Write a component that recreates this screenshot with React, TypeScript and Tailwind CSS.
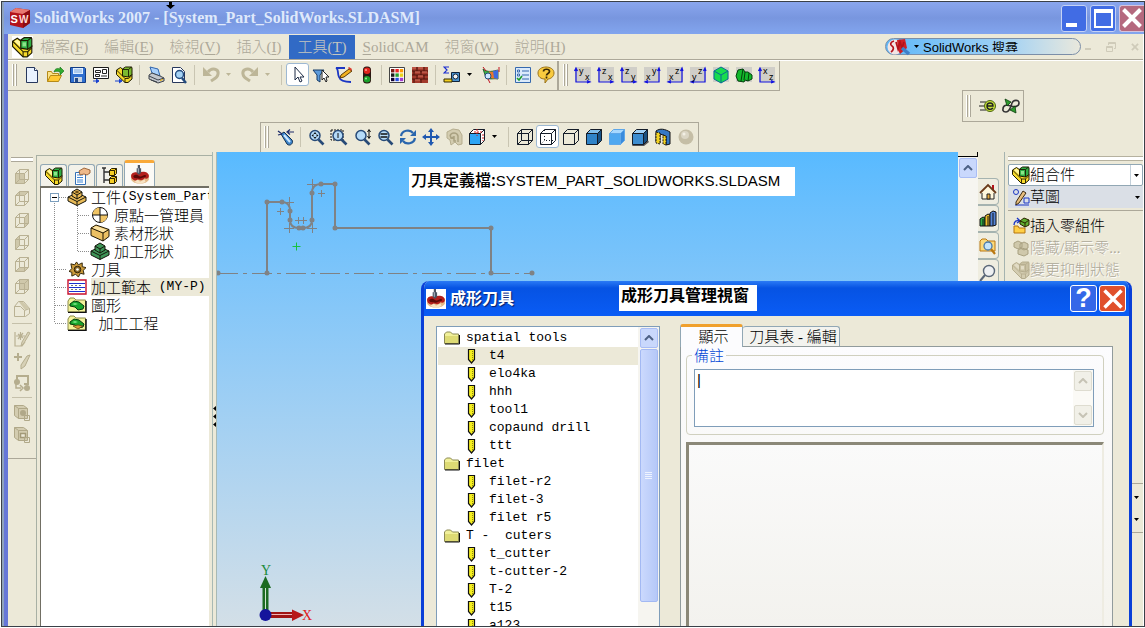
import React, { type ReactNode } from "react";

type KidProps = { children?: ReactNode };

function Svg({ children, className = "w-[18px] h-[18px]" }: KidProps & { className?: string }) {
  return (
    <svg viewBox="0 0 18 18" className={`shrink-0 ${className}`} fill="none" aria-hidden="true">
      {children}
    </svg>
  );
}

/* ---------- brand and window icons ---------- */

const SwCube = () => (
  <svg viewBox="0 0 22 22" className="h-[22px] w-[22px] shrink-0" aria-hidden="true">
    <path d="M1 5 7 1l14 2v13l-7 5L1 18z" fill="#b3121a" />
    <path d="M1 5 7 1l14 2-7 4z" fill="#e87a72" />
    <path d="M14 7l7-4v13l-7 5z" fill="#8d0d12" />
    <text x="1.5" y="16" fontSize="11" fontWeight="bold" fill="#fff" fontFamily="Liberation Sans">S</text>
    <text x="10" y="16" fontSize="10" fontWeight="bold" fill="#ffd9d5" fontFamily="Liberation Sans">W</text>
  </svg>
);

const Assembly = ({ className = "w-[18px] h-[18px]", gray = false }: { className?: string; gray?: boolean }) => {
  const line = gray ? "#b5ad8e" : "#1d1a00";
  return (
    <Svg className={className}>
      <path d="M.5 4l4-2.500L8 4v4h9v6l-4 3.500H9.500L.5 8.500z" fill={gray ? "#d3ccb0" : "#f6d92b"} stroke={line} />
      <path d="M.5 4l9 9v4.500M9.500 13h4L17 9.500M13.500 13v4" stroke={line} strokeWidth=".9" />
      <path d="M2 4l2.500-1.500L7.500 5v4z" fill={gray ? "#e2dcc6" : "#fff6a0"} />
      <path d="M7.500 3l3-2h6l.500 1v6.500L13.500 11l-6-1z" fill={gray ? "#c8c0a2" : "#2fae45"} stroke={line} />
      <path d="M7.500 3.500h6V11M13.500 3.500l3-2.500" stroke={line} strokeWidth=".9" />
      <path d="M9 5h3v3.500H9z" fill={gray ? "#e2dcc6" : "#8ce68a"} />
    </Svg>
  );
};

const Cutter = ({ className = "w-[20px] h-[20px]" }: { className?: string }) => (
  <Svg className={className}>
    <path d="M1 9c1-3 15-3 16 0v4c-2 5-14 5-16 0z" fill="#e3b987" />
    <path d="M1 10c0-4 5-4 7-3 3-2 9-1 9 3 0 2-2 3-4 2-1 2-4 2-5 1-2 2-7 1-7-3z" fill="#b41f1c" />
    <path d="M3 10c2-2 4-1 5 0s3 0 5-1c2 0 2 2 0 2-2 0-4 2-6 1-2 0-4 0-4-2z" fill="#5c0907" />
    <path d="M4 15l3-2 2 2 4-2 1 2c-3 2-7 2-10 0z" fill="#f7e3c4" />
    <path d="M7 0h2v3h1v4L8 9 6 7V3h1z" fill="#4b5563" />
    <path d="M7 3h1v4H7z" fill="#a9b4c2" />
  </Svg>
);

/* ---------- standard toolbar ---------- */

const NewDoc = () => (
  <Svg>
    <path d="M3.500 1.500h8l3 3v12h-11z" fill="#e9f2ff" stroke="#27375c" />
    <path d="M11.500 1.500v3h3" stroke="#27375c" fill="#fff" />
  </Svg>
);
const OpenDoc = () => (
  <Svg>
    <path d="M1.500 15.500v-10h4l1 2h6v2" fill="#fbe389" stroke="#b58a18" />
    <path d="M1.500 15.500l3-6h11l-3 6z" fill="#ffc933" stroke="#b58a18" />
    <path d="M8 6c1-4 4-4 6-3V1l4 4-4 4V6c-2-1-4-1-6 0z" fill="#2fab2f" stroke="#116b11" strokeWidth=".6" />
  </Svg>
);
const Save = () => (
  <Svg>
    <path d="M1.500 1.500h14l1 1v14h-15z" fill="#2f6fd0" stroke="#123c85" />
    <path d="M4 2h10v6H4z" fill="#dfeeff" />
    <path d="M5 4h8M5 6h8" stroke="#7ba5dc" />
    <path d="M5 11h8v5H5z" fill="#c7d3e2" />
    <path d="M6 12h3v4H6z" fill="#234a8a" />
  </Svg>
);
const Drawing = () => (
  <Svg>
    <path d="M1.500 1.500h15v11h-15z" fill="#fff" stroke="#1c1c1c" />
    <path d="M3.500 4.500h5v2h-5zM10.500 3.500h4v4h-4zM3.500 8.500h4v2h-4z" stroke="#222" />
    <path d="M9 10h6" stroke="#222" />
    <path d="M1 15h5M4 13l3 2-3 2" stroke="#1740d0" fill="#1740d0" />
  </Svg>
);
const MakeAssembly = () => (
  <Svg>
    <path d="M1.500 4l4-2.500L8.500 4v4H17v5l-4 3.500h-3L1.500 8.500z" fill="#f6d92b" stroke="#1d1a00" />
    <path d="M1.500 4l8.500 8.500v4M10 12.500h3.500L17 9.500" stroke="#1d1a00" strokeWidth=".9" />
    <path d="M7.500 3l3-2h6l.500 1v6.500L13.500 11l-6-1z" fill="#7bb92f" stroke="#1d1a00" />
    <path d="M7.500 3.500h6V11M13.500 3.500l3-2.500" stroke="#1d1a00" strokeWidth=".9" />
    <path d="M0 15h5M4 13l3 2-3 2" stroke="#1740d0" fill="#1740d0" />
  </Svg>
);
const Print = () => (
  <Svg>
    <path d="M3 1l8 2 2 7-8-3z" fill="#a9d0fb" stroke="#2f64ac" />
    <path d="M2 9l3-2 8 3 4 2v3l-6 2-9-4z" fill="#c3c7cd" stroke="#3e434b" />
    <path d="M2 10l9 4 6-2M4 14l6 2" stroke="#3e434b" />
    <path d="M13 14l3-1v1l-3 1z" fill="#f5b400" />
  </Svg>
);
const Preview = () => (
  <Svg>
    <path d="M2.500 1.500h8l4 4v11h-12z" fill="#fff" stroke="#27375c" />
    <circle cx="9.500" cy="8.500" r="4" fill="#a7d3f5" stroke="#234b7d" strokeWidth="1.400" />
    <path d="M12 12l4 5" stroke="#234b7d" strokeWidth="2.400" />
  </Svg>
);
const Undo = ({ flip = false }: { flip?: boolean }) => (
  <Svg>
    <g transform={flip ? "matrix(-1 0 0 1 18 0)" : undefined}>
      <path d="M6 6c4-5 11-3 10 2-.5 4-4 5-7 7" stroke="#bdb698" strokeWidth="3" />
      <path d="M1 1v9h9z" fill="#bdb698" />
    </g>
  </Svg>
);
const Pointer = () => (
  <Svg>
    <path d="M6 1v13l3-3 2 5 2-1-2-4h4z" fill="#fff" stroke="#1c2a44" />
  </Svg>
);
const Filter = () => (
  <Svg>
    <path d="M1 4h11l-4 5v7l-3-2V9z" fill="#5b9bdc" stroke="#173a66" />
    <path d="M10 4v10l2-2 2 4 1-1-1-4h3z" fill="#fff" stroke="#222" />
  </Svg>
);
const Sketch = () => (
  <Svg>
    <path d="M10 2H1c3 1 1 5 3 9 1 3 5 5 12 5" stroke="#1b36c4" strokeWidth="1.800" />
    <path d="M6 9l8-6 3 2-8 6-4 1z" fill="#f2b21d" stroke="#5b3b06" />
    <path d="M13 2l1-1 3 2-1 2z" fill="#d9392b" />
  </Svg>
);
const Traffic = () => (
  <Svg>
    <rect x="5" y="0.500" width="8" height="17" rx="3.500" fill="#2b1712" />
    <circle cx="9" cy="4.800" r="3.300" fill="#e0241b" />
    <circle cx="9" cy="13.200" r="3.300" fill="#1aa02a" />
    <circle cx="8" cy="4" r="1" fill="#ff9f97" />
    <circle cx="8" cy="12.400" r="1" fill="#9cf2a0" />
  </Svg>
);
const GRID_COLOURS = [
  ["#7a1b14", "#e22", "#f90"],
  ["#1a1a1a", "#27a02d", "#e9d21a"],
  ["#103", "#2a50e0", "#a33bd0"],
];
const Palette = () => (
  <Svg>
    <path d="M1.500 1.500h15v15h-15z" fill="#fff" stroke="#444" />
    {GRID_COLOURS.map((row, r) =>
      row.map((c, i) => <rect key={`${r}-${i}`} x={3 + i * 4.400} y={3 + r * 4.400} width="3.400" height="3.400" fill={c} />),
    )}
  </Svg>
);
const Bricks = () => (
  <Svg>
    <path d="M1 1h16v16H1z" fill="#a33a2c" />
    <path d="M1 5h16M1 9h16M1 13h16M6 1v4M13 1v4M3 5v4M10 5v4M6 9v4M13 9v4M3 13v4M10 13v4" stroke="#4a120b" />
    <path d="M1 2h4M7 2h5M4 6h5M11 6h5M7 10h5M4 14h5" stroke="#d4705f" />
  </Svg>
);
const Measure = () => (
  <Svg>
    <path d="M6 1H1l3 3-3 3h5" stroke="#1b2fd0" strokeWidth="1.200" />
    <path d="M8.500 6.500h8v9h-8z" fill="#4b93cf" stroke="#10233a" />
    <circle cx="12.500" cy="10.500" r="2.500" fill="#f4f4f4" stroke="#10233a" />
    <path d="M1 13h8v3H1z" fill="#f4d01e" stroke="#332a00" />
  </Svg>
);
const Thickness = () => (
  <Svg>
    <path d="M1 3c5 4 10 2 15 1v9c-4-1-8 1-12-1z" fill="#3cae49" stroke="#184d1e" strokeWidth=".8" />
    <path d="M7 5c3 2 6 0 9-1v9c-3-1-5 0-7-1z" fill="#e8772c" />
    <path d="M11 5l5-1v9l-4-1z" fill="#3d6be0" />
    <circle cx="6" cy="10" r="3" fill="#cde7ff" stroke="#234b7d" />
    <path d="M6 13l2 4M1 1l3 4M17 1v5" stroke="#c1121f" />
  </Svg>
);
const Options = () => (
  <Svg>
    <path d="M1.500 1.500h15v15h-15z" fill="#dbeafb" stroke="#3669ae" />
    <path d="M8 5h7M8 9h7M8 13h7" stroke="#3669ae" strokeWidth="1.200" />
    <path d="M3.500 4h2v2h-2zM3.500 8h2v2h-2z" stroke="#3669ae" fill="#fff" />
    <path d="M3 12l2 2 3-4" stroke="#1d9c2b" strokeWidth="1.600" />
  </Svg>
);
const Help = () => (
  <Svg>
    <path d="M1 7c0-8 16-8 16 0 0 4-4 6-6 6l-3 4v-4C4 13 1 11 1 7z" fill="#f9cb3f" stroke="#99721a" />
    <path d="M6.500 5.500c0-3 6-3 6 0 0 2-3 2-3 4M9.500 10.500v2" stroke="#3b2a06" strokeWidth="1.700" />
  </Svg>
);
const Caret = ({ muted = false }: { muted?: boolean }) => (
  <svg viewBox="0 0 5 3" className={`h-[3px] w-[5px] shrink-0 ${muted ? "fill-[#bdb698]" : "fill-black"}`} aria-hidden="true">
    <path d="M0 0h5L2.500 3z" />
  </svg>
);
const Axes = ({ top, side, right = false }: { top: string; side: string; right?: boolean }) => (
  <svg viewBox="0 0 20 20" className="h-5 w-5 shrink-0" fill="none" aria-hidden="true">
    <path d="M2 2h16v15H2z" fill="#d0cec8" />
    <g stroke="#1212e0" strokeWidth="1.200">
      {right ? <path d="M17 3v14H3M15.500 6L17 3l1 3M6 15.500L3 17l3 1" /> : <path d="M3 3v14h14M1.500 6L3 3l1.500 3M14 15.500l3 1.500-3 1" />}
    </g>
    <text x={right ? 10 : 6} y="9" fontSize="9" fill="#000" fontFamily="Liberation Sans">{top}</text>
    <text x={right ? 4 : 12} y="15" fontSize="9" fill="#000" fontFamily="Liberation Sans">{side}</text>
  </svg>
);
const GreenCube = () => (
  <Svg>
    <path d="M1 1h16v15H1z" fill="#d0cec8" />
    <path d="M9 1l7 4v8l-7 4-7-4V5z" fill="#18dc4e" stroke="#0a6a94" />
    <path d="M2 5l7 4 7-4M9 9v8" stroke="#0a6a94" />
  </Svg>
);
const GreenPart = () => (
  <Svg>
    <path d="M1 1h16v15H1z" fill="#d0cec8" />
    <path d="M1 10l2-6 5-1 2 3h3l4 3v4l-4 2-3-1-1 2-6-1z" fill="#12b82a" stroke="#04400c" />
    <path d="M8 3L6 15M10 6l-1 8M14 7l-1 8" stroke="#04400c" />
  </Svg>
);

/* ---------- view toolbar ---------- */

const Zoom = ({ kind }: { kind: "fit" | "area" | "inout" | "select" }) => (
  <Svg>
    {kind === "area" && <path d="M1 2h12v10H1z" stroke="#111" strokeDasharray="2 1" />}
    <circle cx="8" cy="7.500" r="5" fill="#b5dbf8" stroke="#274a77" strokeWidth="1.500" />
    <path d="M11.500 11.500l5 5" stroke="#274a77" strokeWidth="2.600" />
    {kind === "fit" && <path d="M8 4l1.500 2h-3zM8 11L6.500 9h3zM4.500 7.500l2-1.500v3zM11.500 7.500l-2-1.500v3z" fill="#111" />}
    {kind === "area" && <path d="M8 5v5" stroke="#111" />}
    {kind === "inout" && <path d="M16 2v8M14.500 4L16 1.500 17.500 4M14.500 8l1.500 2.500L17.500 8" stroke="#111" />}
    {kind === "select" && <path d="M4.500 6h7M4.500 9h7" stroke="#111" strokeWidth="1.400" />}
  </Svg>
);
const Wand = () => (
  <Svg>
    <path d="M4 6l3-2 8 8c2 3-2 7-5 4z" fill="#3d86cc" stroke="#13304f" />
    <path d="M7 7l6 7" stroke="#cfe9ff" strokeWidth="2" />
    <path d="M1 3l4 3M1 7l4-1M17 4H11M13 1.500L10 4l3 2.500" stroke="#1b2a6a" strokeWidth="1.200" />
  </Svg>
);
const Rotate = () => (
  <Svg>
    <path d="M2 8c1-6 9-7 12-3M16 10c-1 6-9 7-12 3" stroke="#2a66ad" strokeWidth="2.200" />
    <path d="M17 2v6h-6zM1 16v-6h6z" fill="#2a66ad" />
  </Svg>
);
const Pan = () => (
  <Svg>
    <path d="M9 2v14M2 9h14" stroke="#1f58b0" strokeWidth="2" />
    <path d="M9 0l3 4H6zM9 18l-3-4h6zM0 9l4-3v6zM18 9l-4 3V6z" fill="#1f58b0" />
  </Svg>
);
const GrayRotate = () => (
  <Svg>
    <path d="M2 4l6-3 6 1 3 5v9l-4 1-3-3-4 3-1-5-3-2z" fill="#d3ccb0" stroke="#b5ad8e" />
    <path d="M5 8c1-4 7-4 8 0v6M5 7l1 3 3-1M9 8v5h2" stroke="#a9a181" strokeWidth="1.500" />
  </Svg>
);
type CubeStyle = "wire" | "hidden" | "lines" | "dark" | "light" | "shadow" | "views";
const CUBE_FILLS: Record<CubeStyle, string[]> = {
  wire: ["none", "none", "none"],
  hidden: ["#fff", "#fff", "#fff"],
  lines: ["none", "none", "none"],
  dark: ["#2f83c8", "#7dbdec", "#185387"],
  light: ["#4fa8f0", "#a7d8ff", "#3a8bdc"],
  shadow: ["#3d8dd0", "#9fd0f5", "#1a507f"],
  views: ["#2da5f5", "#fff", "#fff"],
};
const Cube = ({ kind }: { kind: CubeStyle }) => {
  const [front, top, side] = CUBE_FILLS[kind];
  const stroke = kind === "light" ? "#5fa7e8" : "#141c28";
  return (
    <Svg>
      {kind === "shadow" && <path d="M3 15l13-4 2 3-5 4H1z" fill="#555" />}
      <path d="M1.500 5.500h11v11h-11z" fill={front} stroke={stroke} />
      <path d="M1.500 5.500l4-4h11l-4 4z" fill={top} stroke={stroke} />
      <path d="M12.500 5.500l4-4v11l-4 4z" fill={side} stroke={stroke} />
      {kind === "wire" && <path d="M5.500 1.500v11h11M5.500 12.500l-4 4" stroke={stroke} />}
      {kind === "hidden" && <path d="M5.500 2v10.500H16M5.500 12.500l-4 4" stroke={stroke} strokeDasharray="1 2" />}
      {kind === "views" && <path d="M9 1v7M6 4h9M15 6v7" stroke="#d21d1d" strokeDasharray="2 1" />}
    </Svg>
  );
};
const Section = () => (
  <Svg>
    <path d="M2 3c4-3 9-2 14 1v12l-4 1V8L6 6v9l-4-1z" fill="#3578c4" stroke="#111" />
    <path d="M2 4l4 1v11l-4-1zM9 7l3 1v9l-3-1z" fill="#f3d321" stroke="#111" strokeDasharray="2 1" />
  </Svg>
);
const Ball = () => (
  <Svg>
    <circle cx="9" cy="9" r="7.500" fill="#c5bea6" />
    <circle cx="8" cy="7" r="4" fill="#dbd6c5" />
    <circle cx="7" cy="6" r="1.500" fill="#f2efe4" />
  </Svg>
);

/* ---------- left toolbar ---------- */

const FACES = ["M2.500 5.500h9v10h-9z", "M2.500 5.500l4-4h9l-4 4z", "M11.500 5.500l4-4v10l-4 4z", "M2.500 5.500l4-4v10l-4 4z", "M2.500 15.500l4-4h9l-4 4z", "M6.500 1.500h9v10h-9z"];
const FaceCube = ({ face }: { face: string }) => (
  <Svg>
    <path d={face} fill="#cfc8ab" />
    <path d="M2.500 5.500h9v10h-9zM2.500 5.500l4-4h9l-4 4M15.500 1.500v10l-4 4M6.500 1.500v10h9M6.500 11.500l-4 4" stroke="#b9b193" />
  </Svg>
);
const NormalTo = () => (
  <Svg>
    <path d="M1.500 6.500l4-5h5l6 7v5l-4 3h-11z" stroke="#b9b193" />
    <path d="M6 2h4l6 6-4 2z" fill="#cfc8ab" />
    <path d="M1.500 6.500h6l4 4v6M11.500 10.500l5-2" stroke="#b9b193" />
  </Svg>
);
const GraySketch = () => (
  <Svg>
    <path d="M2 2v14h7l3-4M5 4l5 4M10 3L5 9M7.500 2v8M3 6h9" stroke="#b9b193" strokeWidth="1.200" />
    <path d="M9 12l6-10 2 1-6 10-3 3z" fill="#d6d0b6" stroke="#b9b193" />
  </Svg>
);
const GrayAdd = () => (
  <Svg>
    <path d="M1 5h8M5 1v8" stroke="#b5ad8e" strokeWidth="2" />
    <path d="M8 13l6-9 3-1-5 11-4 3z" fill="#d6d0b6" stroke="#b5ad8e" />
  </Svg>
);
const GrayReplace = () => (
  <Svg>
    <path d="M4 8V2h11v8h-4" stroke="#b5ad8e" strokeWidth="2" />
    <circle cx="4" cy="8" r="3" fill="#b5ad8e" />
    <circle cx="14" cy="14" r="3" fill="#b5ad8e" />
    <path d="M3 10v4h5M7 11l3 3-3 3" stroke="#b5ad8e" strokeWidth="1.500" />
  </Svg>
);
const GrayBlock = ({ open = false }: { open?: boolean }) => (
  <Svg>
    <path d="M1.500 1.500h9l4 3v10h-9l-4-3z" fill="#d3ccb0" stroke="#b0a888" />
    <path d="M1.500 1.500l4 3h9M5.500 4.500v10" stroke="#b0a888" />
    {open ? <path d="M7.500 7.500h5v4h-5z" fill="#ece9d8" stroke="#a39a78" strokeWidth="1.500" /> : <circle cx="10" cy="9" r="3" fill="#b0a888" />}
    <path d="M11.500 11.500h5v5h-5z" stroke="#b0a888" />
  </Svg>
);

/* ---------- tree icons ---------- */

const PropertyTab = () => (
  <Svg>
    <path d="M2.500 5.500h10v12h-10z" fill="#fff" stroke="#3470b5" />
    <path d="M4 8h6M4 10.500h6M4 13h6M4 15h6" stroke="#3f86d4" />
    <path d="M6 4l5-3 6 2v3l-3 2-3-1-4 1z" fill="#eeb98a" stroke="#8b4f21" strokeWidth=".8" />
  </Svg>
);
const ConfigTab = () => (
  <Svg>
    <path d="M3 1v15M3 5h5M3 13h5M1 1h4" stroke="#333" strokeWidth="1.400" />
    <path d="M8.500 3.500l2-2h5v5l-2 2h-5zM8.500 11.500l2-2h5v5l-2 2h-5z" fill="#f5cd25" stroke="#2d2300" />
    <path d="M8.500 3.500h5v5M13.500 3.500l2-2M8.500 11.500h5v5M13.500 11.500l2-2" stroke="#2d2300" />
  </Svg>
);
const Workpiece = ({ green = false }: { green?: boolean }) => (
  <svg viewBox="0 0 20 18" className="h-[18px] w-[20px] shrink-0" aria-hidden="true">
    <g fill={green ? "#3e9457" : "#e8ba57"} stroke="#15150c">
      <path d="M1 9l9-4 9 4v4l-9 4.500L1 13z" />
      <path d="M1 9l9 4.500L19 9M10 13.500v4" fill="none" />
      <path d="M5 4l5-3 5 3v4l-5 3-5-3z" />
      <path d="M5 4l5 3 5-3M10 7v4" fill="none" />
    </g>
    {!green && <path d="M7.500 4L10 2.500 12.500 4 10 5.500z" fill="#6b4a10" />}
  </svg>
);
const Origin = () => (
  <Svg>
    <circle cx="9" cy="9" r="7.500" fill="#fff" stroke="#111" />
    <path d="M9 1.500A7.500 7.500 0 0 0 1.500 9H9zM9 16.500A7.500 7.500 0 0 0 16.500 9H9z" fill="#f0c465" />
    <path d="M9 1v16M1 9h16" stroke="#111" />
  </Svg>
);
const Stock = () => (
  <svg viewBox="0 0 20 18" className="h-[18px] w-[20px] shrink-0" fill="none" aria-hidden="true">
    <path d="M1 4l5-3 13 4.500v7L13 17 1 11.500z" fill="#ecc063" stroke="#1d1503" />
    <path d="M2.500 4L6 2l11 4-4 2.500z" fill="#fbe3a2" />
    <path d="M1 4l12 5 6-3.500M13 9v8" stroke="#1d1503" />
  </svg>
);
const Gear = () => (
  <Svg className="h-[17px] w-[17px]">
    <path d="M8 1l2 3 4-2v4l4 1-3 3 1 4-4-1-2 4-3-3-4 2v-4L0 11l3-3-1-5 4 1z" fill="#c99a3c" stroke="#2b1f05" />
    <circle cx="9" cy="9" r="3.500" fill="#8a6a2a" stroke="#2b1f05" />
    <circle cx="9" cy="9" r="1.400" fill="#fff" />
  </Svg>
);
const Template = () => (
  <svg viewBox="0 0 20 16" className="h-4 w-5 shrink-0" fill="none" aria-hidden="true">
    <path d="M1 1h18v14H1z" fill="#fff" stroke="#c8102e" strokeWidth="1.400" />
    <path d="M2 4.500h16M2 8.500h16M2 12.500h16" stroke="#1b2fd0" />
    <path d="M4 6.500h12M4 10.500h12" stroke="#777" strokeDasharray="2 2" />
  </svg>
);
const Geometry = ({ op = false }: { op?: boolean }) => (
  <svg viewBox="0 0 20 16" className="h-4 w-5 shrink-0" fill="none" aria-hidden="true">
    <path d="M1 4l2-3h4l2 2h9.500v12H1z" fill="#f4f39a" stroke="#8d8c4a" />
    <path d="M1 15.500h18V4" stroke="#111" strokeWidth="1.500" />
    <path d="M3 7l4-3 5 1 5 4-1 3-5 1-3-3-5-1z" fill="#17a52c" stroke="#053b0c" />
    <path d="M5 7l3-1 3 1-3 1z" fill="#7ae884" />
    {op && <path d="M6 11l5-1 5 1-5 3z" fill="#d99a3a" stroke="#5b3b06" strokeWidth=".7" />}
  </svg>
);
const Folder = () => (
  <svg viewBox="0 0 16 14" className="h-[14px] w-[16px] shrink-0" aria-hidden="true">
    <path d="M.5 12.500V3l2-2h4l2 2h6v9.500z" fill="#f1f09a" stroke="#8c8a55" />
    <path d="M1 5h13v7H1z" fill="#dedb74" />
    <path d="M1 13h14.500V4" stroke="#111" fill="none" />
  </svg>
);
const Tool = () => (
  <svg viewBox="0 0 10 16" className="h-[16px] w-[10px] shrink-0" aria-hidden="true">
    <path d="M1.500 1.500h6v10l-3 3.500-3-3.500z" fill="#f5ee1e" stroke="#111" strokeWidth="1.200" />
    <path d="M5.500 3v9" stroke="#8f8a12" strokeDasharray="1 1" />
  </svg>
);

/* ---------- task pane icons ---------- */

const Home = () => (
  <Svg>
    <path d="M13 2h2v6h-2z" fill="#b3121a" />
    <path d="M3 9h12v7H3z" fill="#fff7dd" stroke="#222" />
    <path d="M1 10l8-8 8 8" stroke="#6a3a1a" strokeWidth="1.800" fill="#fff7dd" />
    <path d="M8 11h3v5H8z" fill="#e6a93c" stroke="#222" />
  </Svg>
);
const Books = () => (
  <Svg>
    <path d="M1 9l3-2 2 1v8H1z" fill="#2fae45" stroke="#111" />
    <path d="M6 6l3-2 2 1v11H6z" fill="#f2c22c" stroke="#111" />
    <path d="M11 3l3-2 3 1v13l-3 1h-3z" fill="#5585d8" stroke="#111" />
    <path d="M4 9v7M9 6v10M14 3v13" stroke="#111" />
  </Svg>
);
const Explorer = () => (
  <Svg>
    <path d="M1 14V4l2-2h4l2 2h7v10z" fill="#fbd97b" stroke="#b97712" />
    <circle cx="9" cy="9" r="4" fill="#c4e4fb" stroke="#4a7aaa" strokeWidth="1.300" />
    <path d="M12 12l4 5" stroke="#b97712" strokeWidth="2.200" />
  </Svg>
);
const SearchGlass = () => (
  <Svg>
    <circle cx="10" cy="7" r="5.500" fill="#eef0f2" stroke="#5a6778" strokeWidth="1.400" />
    <path d="M6 11l-5 6" stroke="#5a6778" strokeWidth="2" />
  </Svg>
);
const SketchTools = () => (
  <Svg>
    <circle cx="4" cy="4" r="2.500" stroke="#1b36c4" />
    <path d="M12 10h5v5h-5zM3 17h14" stroke="#1b36c4" />
    <path d="M4 14l7-11 3 2-7 10-3 2z" fill="#e6bd7c" stroke="#3b2a12" />
  </Svg>
);
const InsertPart = () => (
  <Svg>
    <path d="M2 8c0-4 3-5 5-4M5 1l3 3-3 2" stroke="#1b36c4" strokeWidth="1.300" />
    <path d="M2 16V9h4l1 2h6v5z" fill="#ffcf45" stroke="#b5740f" />
    <path d="M8 4l4-3 5 2v5l-4 2-5-3z" fill="#5fae2f" stroke="#2b2300" />
    <path d="M8 4l5 2 4-3M13 6v4" stroke="#2b2300" />
  </Svg>
);
const HideParts = () => (
  <Svg>
    <path d="M2 4l4-2 4 2v4l-4 2-4-2zM8 5l4-2 4 2v4l-4 2-4-2zM6 11l4-2 6 2v4l-4 2-6-2z" fill="#cfc8ab" stroke="#a9a181" />
  </Svg>
);

/* ---------- shared pieces ---------- */

function ToolButton({ label, active = false, children }: KidProps & { label: string; active?: boolean }) {
  return (
    <button
      type="button"
      aria-label={label}
      className={`flex h-[23px] w-[23px] shrink-0 items-center justify-center ${active ? "rounded-[3px] border border-[#9db8d2] bg-white" : ""}`}
    >
      {children}
    </button>
  );
}
const Grip = () => (
  <div className="mx-[3px] flex h-[22px] shrink-0 gap-px">
    <div className="w-[2px] border-r border-[#aca899] bg-white" />
    <div className="w-[2px] border-r border-[#aca899] bg-white" />
  </div>
);
const Sep = ({ tight = false }: { tight?: boolean }) => (
  <div className={`h-5 w-px shrink-0 bg-[#c9c5b2] ${tight ? "mx-[3px]" : "mx-1"}`} />
);
const Drop = ({ muted = false, label }: { muted?: boolean; label: string }) => (
  <button type="button" aria-label={label} className="flex h-[23px] w-4 shrink-0 items-center pl-1">
    <Caret muted={muted} />
  </button>
);
const Chevron = ({ down = false, className }: { down?: boolean; className: string }) => (
  <svg viewBox="0 0 10 6" className={`h-[6px] w-[10px] ${className}`} fill="none" strokeWidth="2" aria-hidden="true">
    <path d={down ? "M1 1l4 4 4-4" : "M1 5l4-4 4 4"} />
  </svg>
);
const XpScrollButton = () => (
  <button type="button" aria-label="向上捲動" className="flex h-5 w-[18px] shrink-0 items-center justify-center rounded-[2px] border border-[#a9bdf5] bg-[#c9d8fc]">
    <Chevron className="stroke-[#4d6185]" />
  </button>
);

/* ---------- window chrome ---------- */

function TitleBar() {
  return (
    <header className="flex h-8 shrink-0 items-center bg-linear-to-b from-[#8aa6ee] via-[#7896df] to-[#82a5ee] pl-[5px]">
      <SwCube />
      <h1 className="ml-[3px] grow truncate text-[16px] leading-5 font-bold text-[#dfe9fb] font-['Liberation_Serif',serif]">
        SolidWorks 2007 - [System_Part_SolidWorks.SLDASM]
      </h1>
      <div className="flex gap-[3px]">
        <button type="button" aria-label="最小化" className="flex h-[27px] w-[26px] items-end rounded-[3px] border border-[#c5d2f5] bg-[#416ce4] p-1">
          <span className="h-1 w-[11px] bg-white" />
        </button>
        <button type="button" aria-label="最大化" className="flex h-[27px] w-[26px] items-center justify-center rounded-[3px] border border-[#c5d2f5] bg-[#416ce4]">
          <span className="h-[19px] w-[19px] border-2 border-t-4 border-white" />
        </button>
        <button type="button" aria-label="關閉" className="flex h-[27px] w-[25px] items-center justify-center rounded-l-[3px] border border-r-0 border-[#d5c3dc] bg-[#b5697f]">
          <svg viewBox="0 0 20 20" className="h-5 w-5" stroke="#fff" strokeWidth="4" aria-hidden="true">
            <path d="M1.500 1.500l17 17M18.500 1.500l-17 17" />
          </svg>
        </button>
      </div>
    </header>
  );
}

const MENUS: [string, string][] = [
  ["檔案", "F"],
  ["編輯", "E"],
  ["檢視", "V"],
  ["插入", "I"],
  ["工具", "T"],
  ["SolidCAM", ""],
  ["視窗", "W"],
  ["說明", "H"],
];

function MenuBar() {
  return (
    <div className="flex h-[26px] shrink-0 items-center border-b border-[#aca899] pl-1">
      <span className="bg-white">
        <Assembly className="h-[22px] w-[21px]" />
      </span>
      <nav className="-ml-px flex grow text-[15px] leading-6 font-light text-[#aca899]">
        {MENUS.map(([name, key]) => (
          <button key={name} type="button" className={`px-2 ${key === "T" ? "bg-[#316ac5] text-[#c3c6c0]" : ""}`}>
            {key ? (
              <>
                {name}(<u className="underline-offset-2">{key}</u>)
              </>
            ) : (
              <>
                <u className="underline-offset-2">S</u>olidCAM
              </>
            )}
          </button>
        ))}
      </nav>
      <div className="mr-1 flex h-[17px] w-[196px] shrink-0 items-center rounded-full border border-[#7b8ea8] bg-linear-to-r from-[#5fb7f7] via-[#9dd0f5] via-60% to-[#e9e8dc] pl-px">
        <svg viewBox="0 0 24 18" className="h-[18px] w-6 shrink-0" fill="none" aria-hidden="true">
          <circle cx="8" cy="9" r="7.500" fill="#f3e5e4" />
          <path d="M10 2l8-1 2 9-7 6-2-4z" fill="#cf1f25" />
          <path d="M7 3c-4 1-4 4-2 5s2 4-1 6M9 4l2 7 2-7 2 6 2-6" stroke="#b3121a" strokeWidth="1.700" />
          <path d="M15 10l7 6" stroke="#3f7fc8" strokeWidth="3.500" />
        </svg>
        <span className="ml-[3px] flex">
          <Caret />
        </span>
        <input
          aria-label="SolidWorks 搜尋"
          defaultValue="SolidWorks 搜尋"
          className="ml-1 h-[11px] min-w-0 grow bg-transparent text-[13px] leading-[11px] text-black outline-none font-['Liberation_Sans','Noto_Sans_CJK_TC',sans-serif]"
        />
      </div>
      <div className="flex shrink-0 items-center gap-[15px] pr-1 text-[#cfcbb9]">
        <button type="button" aria-label="最小化文件" className="mt-1 h-[2px] w-[6px] bg-[#cfcbb9]" />
        <button type="button" aria-label="還原文件" className="flex">
          <svg viewBox="0 0 10 10" className="h-[10px] w-[10px]" fill="none" stroke="currentColor" aria-hidden="true">
            <path d="M.5 4.500h6v5h-6zM2.500 3V.500h7v6H8M2.500 1.500h7M.5 5.500h6" />
          </svg>
        </button>
        <button type="button" aria-label="關閉文件" className="flex">
          <svg viewBox="0 0 9 9" className="h-2 w-2" fill="none" stroke="currentColor" strokeWidth="2" aria-hidden="true">
            <path d="M1 1l7 7M8 1L1 8" />
          </svg>
        </button>
      </div>
    </div>
  );
}

function StandardToolbar() {
  return (
    <div className="flex h-[31px] shrink-0 items-center border-t border-white">
      <div className="flex h-[30px] items-center border-r-2 border-b border-[#aca899] pb-[2px] pl-px">
        <Grip />
        <ToolButton label="開新檔案"><NewDoc /></ToolButton>
        <ToolButton label="開啟舊檔"><OpenDoc /></ToolButton>
        <ToolButton label="儲存檔案"><Save /></ToolButton>
        <ToolButton label="產生工程圖"><Drawing /></ToolButton>
        <ToolButton label="產生組合件"><MakeAssembly /></ToolButton>
        <Sep />
        <ToolButton label="列印"><Print /></ToolButton>
        <ToolButton label="預覽列印"><Preview /></ToolButton>
        <Sep />
        <ToolButton label="復原"><Undo /></ToolButton>
        <Drop muted label="復原清單" />
        <ToolButton label="取消復原"><Undo flip /></ToolButton>
        <Drop muted label="取消復原清單" />
        <Sep />
        <ToolButton label="選擇" active><Pointer /></ToolButton>
        <ToolButton label="選擇過濾器"><Filter /></ToolButton>
        <ToolButton label="草圖"><Sketch /></ToolButton>
        <ToolButton label="重新計算"><Traffic /></ToolButton>
        <Sep tight />
        <ToolButton label="編輯色彩"><Palette /></ToolButton>
        <ToolButton label="紋路"><Bricks /></ToolButton>
        <Sep />
        <ToolButton label="量測"><Measure /></ToolButton>
        <Drop label="量測清單" />
        <ToolButton label="厚度分析"><Thickness /></ToolButton>
        <Sep />
        <ToolButton label="選項"><Options /></ToolButton>
        <ToolButton label="說明"><Help /></ToolButton>
      </div>
      <div className="flex h-[30px] items-center border-r border-b border-[#aca899] pr-px pb-[2px] pl-px">
        <Grip />
        <ToolButton label="YX"><Axes top="y" side="x" /></ToolButton>
        <ToolButton label="ZX"><Axes top="z" side="x" /></ToolButton>
        <ToolButton label="ZY"><Axes top="z" side="y" /></ToolButton>
        <ToolButton label="XY"><Axes top="y" side="x" right /></ToolButton>
        <ToolButton label="XZ"><Axes top="z" side="x" right /></ToolButton>
        <ToolButton label="YZ"><Axes top="z" side="y" right /></ToolButton>
        <ToolButton label="等角視"><GreenCube /></ToolButton>
        <ToolButton label="工件視角"><GreenPart /></ToolButton>
        <ToolButton label="XZ 反向"><Axes top="x" side="z" /></ToolButton>
      </div>
    </div>
  );
}

function WebToolbar() {
  return (
    <div className="mr-[119px] flex h-8 shrink-0 items-center self-end border border-[#aca899] pr-px">
      <Grip />
      <span className="w-[2px]" />
      <ToolButton label="3D Instant Website">
        <Svg>
          <path d="M1 5h6M0 9h5M1 13h6" stroke="#222" />
          <circle cx="11" cy="9" r="5.500" fill="#c6e03a" stroke="#4b6410" />
          <path d="M8 9h6c0-4-6-4-6 0s4 4 6 2" stroke="#222" strokeWidth="1.400" />
        </Svg>
      </ToolButton>
      <ToolButton label="更新網站">
        <Svg>
          <path d="M1 12c0-5 5-4 8-3s8 1 8-3-6-3-7 0-2 9-6 9-3-3-3-3z" stroke="#333" strokeWidth="1.600" />
          <path d="M3 2l6 3-4 4zM14 16l-6-3 5-4z" fill="#2d9a2d" stroke="#0a3a0a" strokeWidth=".8" />
        </Svg>
      </ToolButton>
    </div>
  );
}

function ViewToolbar() {
  return (
    <div className="ml-[252px] flex h-[30px] shrink-0 items-center self-start border-t border-r border-l border-[#aca899] pr-px pb-[2px]">
      <Grip />
      <span className="w-[2px]" />
      <ToolButton label="前次視角"><Wand /></ToolButton>
      <Sep tight />
      <ToolButton label="最適當大小"><Zoom kind="fit" /></ToolButton>
      <ToolButton label="局部放大"><Zoom kind="area" /></ToolButton>
      <ToolButton label="放大縮小"><Zoom kind="inout" /></ToolButton>
      <ToolButton label="放大選取範圍"><Zoom kind="select" /></ToolButton>
      <ToolButton label="旋轉視角"><Rotate /></ToolButton>
      <ToolButton label="移動"><Pan /></ToolButton>
      <ToolButton label="3D 工程視角"><GrayRotate /></ToolButton>
      <ToolButton label="標準視角"><Cube kind="views" /></ToolButton>
      <Drop label="標準視角清單" />
      <Sep />
      <ToolButton label="線架構"><Cube kind="wire" /></ToolButton>
      <ToolButton label="顯示隱藏線" active><Cube kind="hidden" /></ToolButton>
      <ToolButton label="移除隱藏線"><Cube kind="lines" /></ToolButton>
      <ToolButton label="帶邊線塗彩"><Cube kind="dark" /></ToolButton>
      <ToolButton label="塗彩"><Cube kind="light" /></ToolButton>
      <ToolButton label="陰影"><Cube kind="shadow" /></ToolButton>
      <ToolButton label="剖面視角"><Section /></ToolButton>
      <ToolButton label="RealView"><Ball /></ToolButton>
    </div>
  );
}

/* ---------- left side ---------- */

function SideToolbar() {
  const cell = "flex h-[22px] w-[22px] items-center justify-center";
  const rule = <div className="mt-[3px] mb-1 h-px w-5 bg-[#c5c0aa]" />;
  return (
    <aside className="w-7 shrink-0">
      <div className="flex h-[307px] flex-col items-center border-b border-[#aca899] pt-[5px]">
        <div className="mb-1 h-[5px] w-[22px] border-y border-[#aca899] bg-white" />
        {FACES.map((f, i) => (
          <button key={f} type="button" aria-label={`視角 ${i + 1}`} className={cell}>
            <FaceCube face={f} />
          </button>
        ))}
        <button type="button" aria-label="正視於" className={cell}><NormalTo /></button>
        {rule}
        <button type="button" aria-label="編輯草圖" className={cell}><GraySketch /></button>
        <button type="button" aria-label="新增" className={cell}><GrayAdd /></button>
        <button type="button" aria-label="取代" className={cell}><GrayReplace /></button>
        {rule}
        <button type="button" aria-label="零件顯示" className={cell}><GrayBlock /></button>
        <button type="button" aria-label="零件隱藏" className={cell}><GrayBlock open /></button>
      </div>
    </aside>
  );
}

type Node = { icon: ReactNode; text: string; mono?: string; child?: boolean; lit?: boolean };
const TREE: Node[] = [
  { icon: <Workpiece />, text: "工件", mono: "(System_Part)" },
  { icon: <Origin />, text: "原點一管理員", child: true },
  { icon: <Stock />, text: "素材形狀", child: true },
  { icon: <Workpiece green />, text: "加工形狀", child: true },
  { icon: <Gear />, text: "刀具" },
  { icon: <Template />, text: "加工範本", mono: " (MY-P)", lit: true },
  { icon: <Geometry />, text: "圖形" },
  { icon: <Geometry op />, text: "\u2002加工工程" },
];

function FeatureManager() {
  const tab = "flex h-[22px] w-[27px] items-center justify-center rounded-t-[3px] border border-b-0 border-[#91a7b4] bg-[#f3f2ea]";
  return (
    <section className="mt-[3px] flex w-[176px] shrink-0 flex-col border-t border-l border-[#a8b0a4] pl-[3px]">
      <div className="flex h-[30px] shrink-0 items-end gap-px">
        <button type="button" aria-label="特徵管理員" className={tab}><Assembly /></button>
        <button type="button" aria-label="屬性管理員" className={tab}><PropertyTab /></button>
        <button type="button" aria-label="組態管理員" className={tab}><ConfigTab /></button>
        <button
          type="button"
          aria-label="SolidCAM 管理員"
          className="flex h-[26px] w-[31px] items-center justify-center rounded-t-[3px] border border-t-[3px] border-b-0 border-[#91a7b4] border-t-[#f9a938] bg-[#fbfaf6]"
        >
          <Cutter />
        </button>
      </div>
      <div className="relative mr-[3px] grow overflow-hidden border-t-2 border-l border-[#716f64] bg-white">
        <svg viewBox="41 188 60 150" className="absolute top-0 left-0 h-[150px] w-[60px]" stroke="#8c8c8c" strokeDasharray="1 1" aria-hidden="true">
          <path d="M54.500 203v120M59 197.500h8M55 269.500h12M55 287.500h12M55 305.500h12M55 323.500h12M77.500 206v46M78 215.500h12M78 233.500h12M78 251.500h12" />
        </svg>
        <button type="button" aria-label="收合" className="absolute top-[5px] left-[9px] flex h-[9px] w-[9px] items-center justify-center border border-[#7b9ebd] bg-white">
          <span className="h-px w-[5px] bg-black" />
        </button>
        <ul className="relative text-[15px] leading-[18px] text-black">
          {TREE.map((n) => (
            <li key={n.text} className={`flex h-[18px] items-center whitespace-pre ${n.child ? "pl-[48px]" : "pl-[25px]"}`}>
              <span className="flex w-[22px] shrink-0 justify-center">{n.icon}</span>
              <span className={`ml-[3px] flex h-[18px] grow items-center ${n.lit ? "bg-[#ece9d8]" : ""}`}>
                <span className="font-['Noto_Sans_CJK_TC',sans-serif] font-light">{n.text}</span>
                {n.mono && <span className="text-[13px] font-['Liberation_Mono',monospace]">{n.mono}</span>}
              </span>
            </li>
          ))}
        </ul>
      </div>
    </section>
  );
}

function Splitter() {
  return (
    <div className="flex w-[5px] shrink-0 flex-col justify-center border-x border-[#a8b9b4] pt-14">
      {[0, 1, 2].map((i) => (
        <svg key={i} viewBox="0 0 3 8" className="h-2 w-[3px]" aria-hidden="true">
          <path d="M3 1v5L0 3.500z" />
        </svg>
      ))}
    </div>
  );
}

/* ---------- graphics area ---------- */

const NODES = [
  [218, 273], [267, 273], [267, 202], [282, 202], [290, 211], [290, 220], [299, 228], [303, 228], [312, 220],
  [312, 193], [321, 184], [335, 184], [335, 228], [491, 228], [491, 273], [532, 273],
];

function GraphicsArea() {
  return (
    <div className="relative grow overflow-hidden bg-linear-to-b from-[#58baff] to-[#d3dfe7]">
      <svg viewBox="217 152 400 474" className="absolute top-0 left-0 h-[474px] w-[400px]" fill="none" aria-hidden="true">
        <g stroke="#7f8285" strokeWidth="2">
          <path d="M267 273v-71h15q8 0 8 9v9q0 8 9 8h4q9 0 9-8v-27q0-9 9-9h14v44h156v45" />
          <path d="M218 273.500h314" strokeWidth="1" strokeDasharray="20 5 4 5" />
          <path d="M284 202.500h10M289.500 197v10M277 211.500h7M280.500 208v7M295 220.500h12M298.500 217v7M303.500 217v7M284 228.500h10M289.500 223v10M307 228.500h10M312.500 223v10M307 184.500h10M312.500 179v10M318 193.500h7M321.500 190v7" strokeWidth="1" />
        </g>
        {NODES.map(([x, y]) => (
          <circle key={`${x}-${y}`} cx={x} cy={y} r="2.500" fill="#7f8285" />
        ))}
        <path d="M292.500 246.500h8M296.500 242.500v8" stroke="#17c23f" />
        <path d="M265.500 612v-25" stroke="#1c6b22" strokeWidth="6" />
        <path d="M265.500 612v-25" stroke="#cfe6cf" />
        <path d="M260 588h11l-5.500-12z" fill="#1c6b22" />
        <path d="M270 615h24" stroke="#a01414" strokeWidth="6" />
        <path d="M270 614.500h22" stroke="#f0b4b4" />
        <path d="M292 609.500v11.500l12-6z" fill="#b81818" />
        <circle cx="265.500" cy="615" r="6" fill="#14149c" />
        <text x="261" y="575" fontSize="14" fill="#1a8a3a" fontFamily="Liberation Serif">Y</text>
        <text x="302" y="620" fontSize="14" fill="#e02020" fontFamily="Liberation Serif">X</text>
      </svg>
      <p className="absolute top-[15px] left-[192px] h-[29px] w-[386px] bg-white pl-[2px] text-[15px] leading-6 font-medium whitespace-nowrap text-black font-['Liberation_Sans','Noto_Sans_CJK_TC',sans-serif]">
        <span className="text-[16px] font-['Noto_Sans_CJK_TC',sans-serif]">刀具定義檔:</span>
        SYSTEM_PART_SOLIDWORKS.SLDASM
      </p>
    </div>
  );
}

/* ---------- right side ---------- */

function TaskPaneTabs() {
  const tab = "flex h-[27px] w-[21px] items-center justify-center rounded-r-[4px] border border-l-0 border-[#a5b3b0] bg-[#efede0]";
  return (
    <div className="flex w-[27px] shrink-0 flex-col border-r border-[#a5b3b0] pt-[26px]">
      <button type="button" aria-label="SolidWorks 資源" className={tab}><Home /></button>
      <button type="button" aria-label="Design Library" className={tab}><Books /></button>
      <button type="button" aria-label="檔案 Explorer" className={tab}><Explorer /></button>
      <button type="button" aria-label="尋找" className={tab}><SearchGlass /></button>
    </div>
  );
}

function CommandPanel() {
  const row = "flex h-[22px] shrink-0 items-center pl-1 whitespace-nowrap";
  const dim = "text-[#aca899] [text-shadow:1px_1px_0_#fff]";
  return (
    <aside className="flex w-[138px] shrink-0 flex-col pt-1 pl-[3px] text-[15px] font-light text-black">
      <div className="mb-[3px] h-[5px] shrink-0 border-y border-[#b5b19f] bg-white" />
      <div className="flex h-[22px] shrink-0 items-center rounded-[2px] border border-[#91a7b4] bg-white pl-[3px]">
        <Assembly />
        <select aria-label="工具列" className="min-w-0 grow appearance-none bg-transparent leading-5 outline-none">
          <option>組合件</option>
        </select>
        <span className="flex h-full w-3 items-center justify-center border-l border-[#c3d0da]"><Caret /></span>
      </div>
      <div className="flex h-[22px] shrink-0 items-center bg-[#dadfe6] pl-1">
        <SketchTools />
        <select aria-label="草圖工具" className="min-w-0 grow appearance-none bg-transparent leading-5 outline-none">
          <option>草圖</option>
        </select>
        <span className="flex w-3 justify-center"><Caret /></span>
      </div>
      <div className="mt-[2px] mb-1 h-px shrink-0 bg-[#aca899]" />
      <button type="button" className={row}><InsertPart />插入零組件</button>
      <button type="button" disabled className={`${row} ${dim}`}><HideParts />隱藏/顯示零...</button>
      <button type="button" disabled className={`${row} ${dim}`}><Assembly gray />變更抑制狀態</button>
      <div className="mt-[202px] flex h-[50px] shrink-0 flex-col items-end justify-center gap-[19px] border-y border-[#aca899] pr-1">
        <Caret />
        <Caret />
      </div>
    </aside>
  );
}

/* ---------- form tool dialog ---------- */

const TOOLS: { group: string; items: string[] }[] = [
  { group: "spatial tools", items: ["t4", "elo4ka", "hhh", "tool1", "copaund drill", "ttt"] },
  { group: "filet", items: ["filet-r2", "filet-3", "filet r5"] },
  { group: "T -  cuters", items: ["t_cutter", "t-cutter-2", "T-2", "t15", "a123"] },
];

function ToolList() {
  return (
    <div className="mt-[2px] flex w-[224px] shrink-0 overflow-hidden border border-b-0 border-[#7f9db9] bg-white">
      <ul className="grow pt-[2px] pl-px text-[13px] leading-[18px] whitespace-pre text-black font-['Liberation_Mono',monospace]">
        {TOOLS.map((g) => (
          <li key={g.group}>
            <div className="flex h-[18px] items-center gap-[6px] pl-[6px]">
              <Folder />
              {g.group}
            </div>
            <ul>
              {g.items.map((t) => (
                <li key={t} className={`flex h-[18px] items-center gap-3 pl-[29px] ${t === "t4" ? "bg-[#ece9d8]" : ""}`}>
                  <Tool />
                  {t}
                </li>
              ))}
            </ul>
          </li>
        ))}
      </ul>
      <div className="flex w-[21px] shrink-0 flex-col items-center bg-[#f6f5f0] pt-px">
        <XpScrollButton />
        <div className="mt-px flex h-[253px] w-[18px] shrink-0 flex-col items-center justify-center gap-px rounded-[2px] border border-[#a3b9f3] bg-linear-to-r from-[#cbd9fd] to-[#b5c8f8]">
          {[0, 1, 2, 3].map((i) => (
            <span key={i} className="h-px w-[7px] bg-[#eef3ff]" />
          ))}
        </div>
      </div>
    </div>
  );
}

function NotesPane() {
  const off = "flex h-5 w-[18px] items-center justify-center rounded-[2px] border border-[#dedcd0] bg-[#f1f0e8]";
  return (
    <div className="mr-4 flex grow flex-col">
      <div className="flex h-[22px] shrink-0 items-end text-[15px] leading-[18px] font-light text-black">
        <button type="button" className="relative z-10 -mb-px h-[23px] w-[63px] rounded-t-[3px] border border-t-[3px] border-b-0 border-[#91a7b4] border-t-[#f0a02c] bg-[#fcfcfe] pl-1 text-center">
          顯示
        </button>
        <button type="button" className="h-5 w-[97px] rounded-t-[3px] border border-b-0 border-l-0 border-[#91a7b4] bg-[#f3f3ef] pl-1 whitespace-nowrap">
          刀具表 - 編輯
        </button>
      </div>
      <div className="flex grow flex-col border border-b-0 border-[#919b9c] bg-linear-to-b from-[#fcfcfe] to-[#f4f3ee] pr-2 pl-[5px]">
        <fieldset className="relative mt-2 h-20 shrink-0 rounded-[4px] border border-[#d0d0bf] px-[7px] pt-[13px]">
          <legend className="absolute -top-[9px] left-[5px] bg-[#fcfcfe] px-[2px] text-[15px] leading-[18px] font-light text-[#0046d5]">
            <label htmlFor="notes">備註</label>
          </legend>
          <div className="mr-[2px] flex h-[58px] border border-[#7f9db9] bg-white">
            <textarea id="notes" defaultValue="|" className="min-w-0 grow resize-none bg-transparent pl-[2px] text-[15px] leading-5 text-black outline-none font-['Liberation_Sans',sans-serif]" />
            <div className="flex w-5 shrink-0 flex-col items-center justify-between bg-[#fbfaf6] py-px">
              <button type="button" aria-label="備註向上" className={off}><Chevron className="stroke-[#c6c3b5]" /></button>
              <button type="button" aria-label="備註向下" className={off}><Chevron down className="stroke-[#c6c3b5]" /></button>
            </div>
          </div>
        </fieldset>
        <div className="mt-[7px] grow border-t-[3px] border-r-2 border-l-[3px] border-[#8b8878] border-r-[#eeece2] bg-linear-to-b from-[#fafafa] to-[#f3f2ee]" />
      </div>
    </div>
  );
}

function FormToolDialog() {
  return (
    <div
      role="dialog"
      aria-labelledby="dialog-title"
      className="absolute top-[281px] right-[13px] bottom-[2px] left-[421px] z-20 flex flex-col overflow-hidden rounded-t-[8px] border-x-[3px] border-[#0a3fd8] bg-[#ece9d8]"
    >
      <div className="flex h-[35px] shrink-0 items-center bg-linear-to-b from-[#2a7af5] via-[#0653e3] via-20% to-[#0a5cf5] pr-[3px] pl-[2px]">
        <span className="bg-white"><Cutter /></span>
        <h2 id="dialog-title" className="ml-1 w-[169px] text-[16px] leading-5 font-bold text-white [text-shadow:1px_1px_1px_#0a1f6a]">
          成形刀具
        </h2>
        <p className="-mt-[2px] h-[26px] w-[138px] bg-white pl-[2px] text-[16px] leading-[22px] font-bold whitespace-nowrap text-black">成形刀具管理視窗</p>
        <button type="button" aria-label="說明" className="ml-auto flex h-[27px] w-[27px] items-center justify-center rounded-[3px] border border-white bg-[#3567e8] text-[27px] leading-none font-bold text-white font-['Liberation_Sans',sans-serif]">
          ?
        </button>
        <button type="button" aria-label="關閉" className="ml-[2px] flex h-[27px] w-[27px] items-center justify-center rounded-[3px] border border-white bg-[#e0502c]">
          <svg viewBox="0 0 20 20" className="h-5 w-5" stroke="#fff" strokeWidth="3.500" aria-hidden="true">
            <path d="M1.500 1.500l17 17M18.500 1.500l-17 17" />
          </svg>
        </button>
      </div>
      <div className="flex min-h-0 grow gap-5 pt-2 pl-3">
        <ToolList />
        <NotesPane />
      </div>
    </div>
  );
}

export default function App() {
  return (
    <div className="relative h-screen overflow-hidden bg-white py-px pl-px font-['Liberation_Serif','Noto_Sans_CJK_TC',serif]">
      <div className="flex h-full overflow-hidden border border-[#3a4048]">
        <div className="w-[2px] shrink-0 bg-[#8fa3bd]" />
        <div className="flex min-w-0 grow flex-col bg-[#6677d8]">
          <TitleBar />
          <div className="ml-1 flex min-h-0 grow flex-col border-r border-white bg-[#ece9d8]">
            <MenuBar />
            <StandardToolbar />
            <div className="-mt-px flex shrink-0 flex-col">
              <WebToolbar />
            </div>
            <ViewToolbar />
            <div className="flex min-h-0 grow">
              <SideToolbar />
              <FeatureManager />
              <Splitter />
              <GraphicsArea />
              <div className="flex w-5 shrink-0 flex-col items-center bg-[#f6f5f0]">
                <div className="mb-px h-[5px] w-full shrink-0 border-r border-b border-black bg-[#ece9d8]" />
                <XpScrollButton />
              </div>
              <TaskPaneTabs />
              <CommandPanel />
            </div>
          </div>
        </div>
      </div>
      <svg viewBox="0 0 9 7" className="absolute top-[2px] left-[166px] h-[7px] w-[9px]" aria-hidden="true">
        <path d="M3 0h3v3h3L4.500 7 0 3h3z" />
      </svg>
      <FormToolDialog />
    </div>
  );
}
